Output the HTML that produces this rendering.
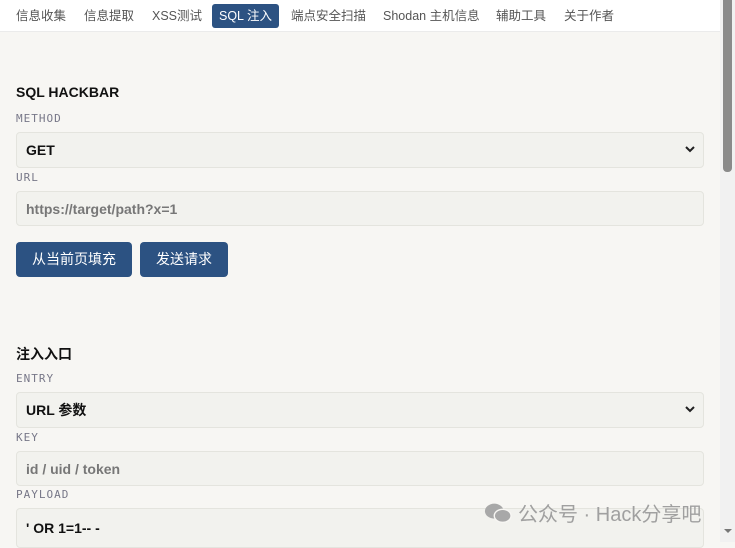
<!DOCTYPE html>
<html><head><meta charset="utf-8"><style>
*{box-sizing:border-box;margin:0;padding:0}
body{width:735px;height:542px;overflow:hidden;background:#f7f6f3;font-family:"Liberation Sans","Noto Sans CJK SC",sans-serif;position:relative}
.nav{position:absolute;left:0;top:0;width:720px;height:32px;background:#fff;border-bottom:1px solid #ebebeb}
.nav span{position:absolute;top:4px;height:24px;line-height:24px;font-size:12.5px;color:#555}
.nav span.act{background:#2c5282;color:#fff;border-radius:3px;padding:0 6px;width:67px;text-align:center}
.sb{position:absolute;left:720px;top:0;width:15px;height:542px;background:#f1f1f1}
.thumb{position:absolute;left:723px;top:0;width:9px;height:172px;background:#8a8a8a;border-radius:0 0 4px 4px}
.arr{position:absolute;left:724px;top:529px;width:0;height:0;border-left:4px solid transparent;border-right:4px solid transparent;border-top:4px solid #777}
h2{position:absolute;left:16px;font-size:14px;font-weight:bold;color:#111}
.lbl{position:absolute;left:16px;font-family:"DejaVu Sans Mono","Liberation Mono",monospace;font-size:11px;color:#778;letter-spacing:1px}
.f{position:absolute;left:16px;width:688px;background:#f2f2ee;border:1px solid #e4e4de;border-radius:4px;padding-left:9px;font-size:14px;font-weight:bold;display:flex;align-items:center}
.sel{color:#111}
.in{color:#777}
.chev{position:absolute;right:8px;top:50%;margin-top:-5px}
.btn{position:absolute;top:242px;height:35px;background:#2c5282;color:#fff;border-radius:4px;font-size:14px;line-height:35px;text-align:center}
.wm{position:absolute;left:484px;top:498px;font-size:20px;color:#a0a0a0;display:flex;align-items:center;gap:6px}
</style></head><body>
<div class="nav">
<span style="left:16px">信息收集</span>
<span style="left:84px">信息提取</span>
<span style="left:152px">XSS测试</span>
<span class="act" style="left:212px">SQL 注入</span>
<span style="left:291px">端点安全扫描</span>
<span style="left:383px">Shodan 主机信息</span>
<span style="left:496px">辅助工具</span>
<span style="left:564px">关于作者</span>
</div>
<h2 style="top:84px">SQL HACKBAR</h2>
<div class="lbl" style="top:112px">METHOD</div>
<div class="f sel" style="top:132px;height:36px">GET<svg class="chev" width="10" height="8" viewBox="0 0 10 8"><path d="M1 2l4 4 4-4" stroke="#222" stroke-width="2" fill="none"/></svg></div>
<div class="lbl" style="top:171px">URL</div>
<div class="f in" style="top:191px;height:35px">https://target/path?x=1</div>
<div class="btn" style="left:16px;width:116px">从当前页填充</div>
<div class="btn" style="left:140px;width:88px">发送请求</div>
<h2 style="top:344px">注入入口</h2>
<div class="lbl" style="top:372px">ENTRY</div>
<div class="f sel" style="top:392px;height:36px">URL 参数<svg class="chev" width="10" height="8" viewBox="0 0 10 8"><path d="M1 2l4 4 4-4" stroke="#222" stroke-width="2" fill="none"/></svg></div>
<div class="lbl" style="top:431px">KEY</div>
<div class="f in" style="top:451px;height:35px">id / uid / token</div>
<div class="lbl" style="top:488px">PAYLOAD</div>
<div class="f sel" style="top:508px;height:40px">' OR 1=1-- -</div>
<div class="wm"><svg width="28" height="22" viewBox="0 0 30 22"><ellipse cx="11" cy="9" rx="10" ry="8" fill="#a8a8a8"/><ellipse cx="20" cy="14" rx="9" ry="7" fill="#a8a8a8" stroke="#f7f6f3" stroke-width="1.5"/></svg>公众号 · Hack分享吧</div>
<div class="sb"></div><div class="thumb"></div><div class="arr"></div>
</body></html>
